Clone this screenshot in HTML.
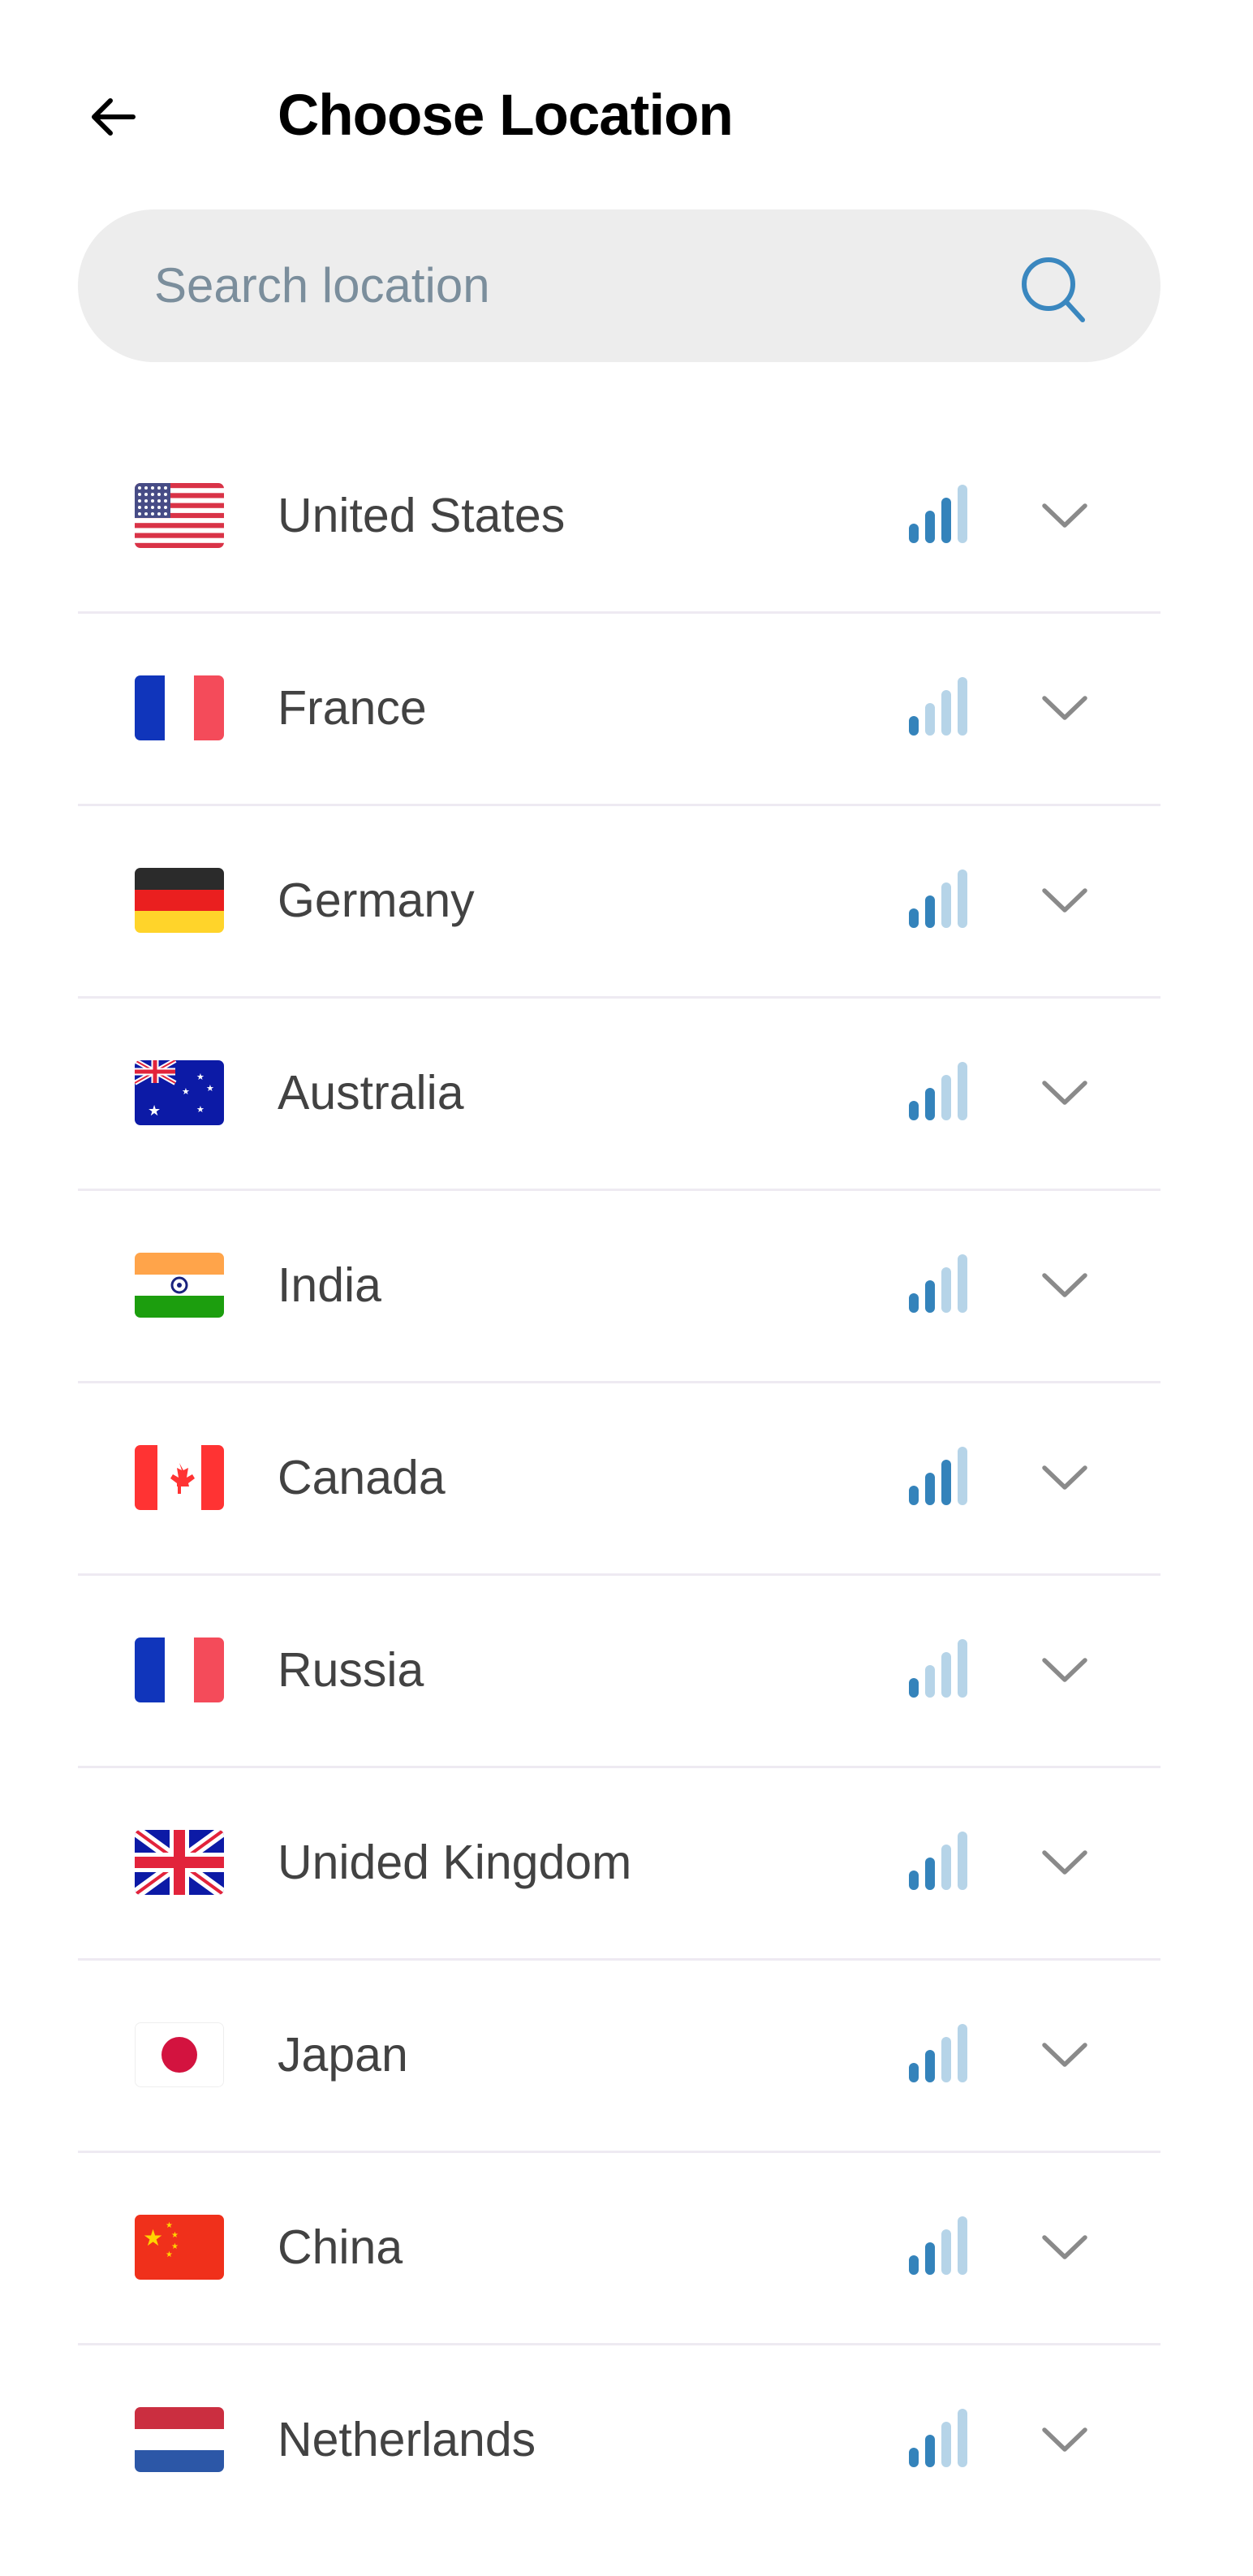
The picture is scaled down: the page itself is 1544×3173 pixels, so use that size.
<!DOCTYPE html>
<html><head><meta charset="utf-8">
<style>
*{margin:0;padding:0;box-sizing:border-box}
body{width:1544px;height:3173px;background:#fff;font-family:"Liberation Sans",Roboto,sans-serif;position:relative;overflow:hidden}
.abs{position:absolute}
.title{left:342px;top:98px;font-size:71px;font-weight:bold;color:#000;letter-spacing:-1px;line-height:90px}
.search{left:96px;top:258px;width:1334px;height:188px;border-radius:94px;background:#ededed}
.ph{left:190px;top:319px;font-size:60px;color:#7b8e9c;line-height:66px}
.row{position:absolute;left:0;width:1544px;height:237px}
.flag{position:absolute;left:166px;top:78px;width:110px;height:80px;border-radius:7px;overflow:hidden}
.name{position:absolute;left:342px;top:86px;font-size:59px;color:#424242;line-height:64px}
.sep{position:absolute;left:96px;top:236px;width:1334px;height:3px;background:#eeeaf2}
.bar{position:absolute;width:12px;border-radius:6px;bottom:0}
.bars{position:absolute;left:1108px;top:80px;width:90px;height:72px}
.chev{position:absolute;left:1282px;top:100px}
</style></head><body>
<svg class="abs" style="left:108px;top:116px" width="64" height="56" viewBox="0 0 64 56"><path d="M56 28H10M28 8L8 28L28 48" stroke="#000" stroke-width="6" fill="none" stroke-linecap="round" stroke-linejoin="round"/></svg>
<div class="abs title">Choose Location</div>
<div class="abs search"></div>
<div class="abs ph">Search location</div>
<svg class="abs" style="left:1252px;top:310px" width="90" height="90" viewBox="0 0 90 90"><circle cx="40" cy="40" r="30" stroke="#3a87bf" stroke-width="6" fill="none"/><path d="M62 62L82 84" stroke="#3a87bf" stroke-width="6" stroke-linecap="round"/></svg>

<div id="rows"></div>
<script>
const D='#3483bb',L='#b6d4e8';
const flags={
us:'<svg width="110" height="80" viewBox="0 0 110 80"><rect width="110" height="80" fill="#fff"/>'+[0,1,2,3,4,5,6].map(i=>`<rect y="${i*12.3}" width="110" height="6.2" fill="#d93347"/>`).join('')+'<rect width="44" height="43" fill="#474c86"/>'+[0,1,2,3,4].map(r=>[0,1,2,3,4].map(c=>`<circle cx="${6+c*8}" cy="${6+r*8}" r="2" fill="#fff"/>`).join('')).join('')+'</svg>',
fr:'<svg width="110" height="80"><rect width="37" height="80" fill="#1035bb"/><rect x="37" width="36" height="80" fill="#fff"/><rect x="73" width="37" height="80" fill="#f44b5a"/></svg>',
de:'<svg width="110" height="80"><rect width="110" height="27" fill="#2b2b2b"/><rect y="27" width="110" height="26" fill="#ea1f1f"/><rect y="53" width="110" height="27" fill="#ffd42a"/></svg>',
au:'<svg width="110" height="80"><rect width="110" height="80" fill="#0c1aa6"/><path d="M0 0L50 28M50 0L0 28" stroke="#fff" stroke-width="6"/><path d="M0 0L50 28M50 0L0 28" stroke="#e2233b" stroke-width="2"/><path d="M25 0V28M0 14H50" stroke="#fff" stroke-width="9"/><path d="M25 0V28M0 14H50" stroke="#e2233b" stroke-width="5"/><text x="16" y="68" fill="#fff" font-size="18">★</text><text x="76" y="24" fill="#fff" font-size="11">★</text><text x="88" y="38" fill="#fff" font-size="11">★</text><text x="58" y="42" fill="#fff" font-size="11">★</text><text x="76" y="64" fill="#fff" font-size="11">★</text></svg>',
in:'<svg width="110" height="80"><rect width="110" height="27" fill="#ffa44a"/><rect y="27" width="110" height="26" fill="#fff"/><rect y="53" width="110" height="27" fill="#1c9e0e"/><circle cx="55" cy="40" r="9" fill="none" stroke="#1a237e" stroke-width="3"/><circle cx="55" cy="40" r="3" fill="#1a237e"/></svg>',
ca:'<svg width="110" height="80"><rect width="110" height="80" fill="#fff"/><rect width="28" height="80" fill="#ff3333"/><rect x="82" width="28" height="80" fill="#ff3333"/><path d="M55 22l5 9 6-3-2 12 7-4 3 5-8 6 1 4H52v-4l-8-6 3-5 7 4-2-12 6 3z" fill="#ff3333"/><rect x="53" y="50" width="4" height="10" fill="#ff3333"/></svg>',
uk:'<svg width="110" height="80"><rect width="110" height="80" fill="#0c1aa6"/><path d="M0 0L110 80M110 0L0 80" stroke="#fff" stroke-width="14"/><path d="M0 0L110 80M110 0L0 80" stroke="#e2233b" stroke-width="4"/><path d="M55 0V80M0 40H110" stroke="#fff" stroke-width="24"/><path d="M55 0V80M0 40H110" stroke="#e2233b" stroke-width="14"/></svg>',
jp:'<svg width="110" height="80"><rect x="0.5" y="0.5" width="109" height="79" rx="7" fill="#fff" stroke="#eee"/><circle cx="55" cy="40" r="22" fill="#d3133f"/></svg>',
cn:'<svg width="110" height="80"><rect width="110" height="80" fill="#f0301b"/><text x="10" y="38" fill="#ffd400" font-size="28">★</text><text x="38" y="16" fill="#ffd400" font-size="10">★</text><text x="45" y="28" fill="#ffd400" font-size="10">★</text><text x="45" y="42" fill="#ffd400" font-size="10">★</text><text x="38" y="52" fill="#ffd400" font-size="10">★</text></svg>',
nl:'<svg width="110" height="80"><rect width="110" height="27" fill="#cb2e40"/><rect y="27" width="110" height="26" fill="#fff"/><rect y="53" width="110" height="27" fill="#2c57a7"/></svg>'
};
const rows=[['us','United States',3],['fr','France',1],['de','Germany',2],['au','Australia',2],['in','India',2],['ca','Canada',3],['fr','Russia',1],['uk','Unided Kingdom',2],['jp','Japan',2],['cn','China',2],['nl','Netherlands',2]];
let h='';
rows.forEach((r,i)=>{
 const top=517+i*237;
 let b='';
 [24,40,56,72].forEach((ht,j)=>{b+=`<div class="bar" style="left:${12+j*20}px;height:${ht}px;background:${j<r[2]?D:L}"></div>`});
 h+=`<div class="row" style="top:${top}px"><div class="flag">${flags[r[0]]}</div><div class="name">${r[1]}</div><div class="bars">${b}</div><svg class="chev" width="60" height="36" viewBox="0 0 60 36"><path d="M5 6L30 30L55 6" stroke="#8a8a8a" stroke-width="5.5" fill="none" stroke-linecap="round" stroke-linejoin="round"/></svg>${i<10?'<div class="sep"></div>':''}</div>`;
});
document.getElementById('rows').innerHTML=h;
</script>
</body></html>
